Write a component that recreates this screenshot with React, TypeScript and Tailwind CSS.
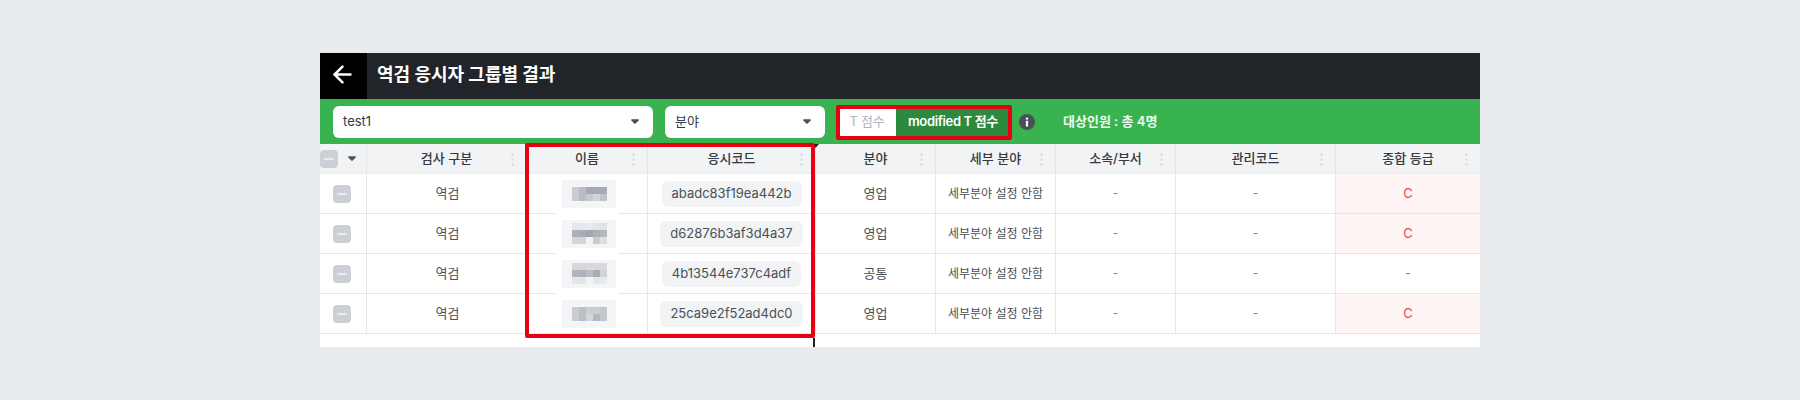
import { ArrowLeft } from "lucide-react"

const rows = [
  {
    code: "abadc83f19ea442b",
    field: "영업",
    grade: "C",
    blurRows: "h-[14px]",
    blur: [
      "bg-[#c9ccd1]", "bg-[#b9bdc7]", "bg-[#a6a9b3]", "bg-[#a6a9b3]", "bg-[#a8acb6]",
      "bg-[#c9ccd1]", "bg-[#b9bdc7]", "bg-[#c6c9ce]", "bg-[#d3d5d9]", "bg-[#c0c4cd]",
    ],
  },
  {
    code: "d62876b3af3d4a37",
    field: "영업",
    grade: "C",
    blurRows: "h-[21px]",
    blur: [
      "bg-[#e6e7ea]", "bg-[#e6e7ea]", "bg-[#e9eaec]", "bg-[#e2e4e7]", "bg-[#dfe1e4]",
      "bg-[#aeb1b8]", "bg-[#a9acb6]", "bg-[#a2a5b1]", "bg-[#adb0b8]", "bg-[#b4b7be]",
      "bg-[#d3d5d9]", "bg-[#d3d5d9]", "bg-[#f1f2f4]", "bg-[#c8cbd0]", "bg-[#dcdee1]",
    ],
  },
  {
    code: "4b13544e737c4adf",
    field: "공통",
    grade: "-",
    blurRows: "h-[21px]",
    blur: [
      "bg-[#d6d8dc]", "bg-[#d6d8dc]", "bg-[#d6d8dc]", "bg-[#d6d8dc]", "bg-[#d6d8dc]",
      "bg-[#b2b5bb]", "bg-[#b0b3ba]", "bg-[#bbbec4]", "bg-[#a9acb3]", "bg-[#d1d3d7]",
      "bg-[#e6e7ea]", "bg-[#e3e5e8]", "bg-[#f2f3f4]", "bg-[#e3e5e8]", "bg-[#e8e9eb]",
    ],
  },
  {
    code: "25ca9e2f52ad4dc0",
    field: "영업",
    grade: "C",
    blurRows: "h-[14px]",
    blur: [
      "bg-[#c9ccd1]", "bg-[#bcbfc7]", "bg-[#c9ccd1]", "bg-[#c9ccd1]", "bg-[#c4c7cd]",
      "bg-[#c9ccd1]", "bg-[#bcbfc7]", "bg-[#d3d5d9]", "bg-[#b5b8c0]", "bg-[#c4c7cd]",
    ],
  },
]

const columns = [
  { label: "검사 구분", width: "w-[160px]" },
  { label: "이름", width: "w-[121px]" },
  { label: "응시코드", width: "w-[168px]" },
  { label: "분야", width: "w-[120px]" },
  { label: "세부 분야", width: "w-[120px]" },
  { label: "소속/부서", width: "w-[120px]" },
  { label: "관리코드", width: "w-[160px]" },
  { label: "종합 등급", width: "w-[144px]" },
]

function Caret({ className }: { className?: string }) {
  return (
    <svg width="8" height="5" viewBox="0 0 8 5" className={className}>
      <path d="M.9.2h6.2c.7 0 1 .7.6 1.2L4.6 4.6c-.3.4-.9.4-1.2 0L.3 1.4C-.1.9.2.2.9.2z" fill="#495057" />
    </svg>
  )
}

function Kebab() {
  return (
    <svg width="3" height="13" viewBox="0 0 3 13" className="absolute right-[12px] top-[9px]">
      <circle cx="1.5" cy="1.5" r="1.1" fill="#ced4da" />
      <circle cx="1.5" cy="6.5" r="1.1" fill="#ced4da" />
      <circle cx="1.5" cy="11.5" r="1.1" fill="#ced4da" />
    </svg>
  )
}

function Minus() {
  return (
    <span className="flex items-center justify-center w-[18px] h-[18px] rounded-[4px] bg-[#ccd0d6]">
      <span className="w-[10px] h-[2px] rounded-sm bg-[#e9ecef]" />
    </span>
  )
}

export default function App() {
  return (
    <div
      className="h-[400px] bg-[#e9ecef] pt-[53px] pl-[320px] overflow-hidden"
      style={{ fontFamily: 'Inter, "Noto Sans CJK KR", sans-serif' }}
    >
      <div className="relative w-[1160px] h-[294px] bg-white">
        <div className="flex items-center h-[46px] bg-[#212529]">
          <div className="flex items-center justify-center w-[47px] h-full pr-[2px] pb-[4px] bg-black text-white">
            <ArrowLeft size={27} strokeWidth={2.2} />
          </div>
          <h1 className="ml-[10px] pb-[3px] text-[18px] font-bold text-white">역검 응시자 그룹별 결과</h1>
        </div>

        <div className="flex items-center h-[45px] pl-[13px] bg-[#38b34f]">
          <div className="flex items-center justify-between w-[320px] h-[32px] pl-[10px] pr-[14px] rounded-md bg-white text-[13px] text-[#343a40]">
            test1
            <Caret />
          </div>
          <div className="flex items-center justify-between w-[160px] h-[32px] ml-[12px] pl-[10px] pr-[14px] rounded-md bg-white text-[13px] text-[#343a40]">
            분야
            <Caret />
          </div>
          <div className="flex h-[32px] ml-[13px] text-[13px]">
            <span className="flex items-center justify-center w-[58px] bg-white text-[#adb5bd] tracking-[-0.2px]">T 점수</span>
            <span className="flex items-center justify-center w-[114px] bg-[#2b8a3e] font-semibold text-white tracking-[-0.35px]">modified T 점수</span>
          </div>
          <svg width="16" height="16" viewBox="0 0 16 16" className="ml-[9px]">
            <circle cx="8" cy="8" r="8" fill="#495057" />
            <circle cx="8" cy="4.6" r="1.2" fill="#fff" />
            <rect x="6.9" y="6.8" width="2.2" height="5.6" rx="0.5" fill="#fff" />
          </svg>
          <span className="ml-[28px] text-[13px] font-semibold text-[#f1f8f2]">대상인원 : 총 4명</span>
        </div>

        <div className="flex h-[30px] bg-[#f1f3f5] border-b border-[#e9ecef]">
          <div className="flex items-center w-[47px] border-r border-[#e5e7eb]">
            <Minus />
            <Caret className="ml-[10px]" />
          </div>
          {columns.map((col) => (
            <div
              key={col.label}
              className={`relative flex items-center justify-center border-r border-[#e5e7eb] last:border-r-0 text-[13px] font-medium text-[#343a40] ${col.width}`}
            >
              {col.label}
              <Kebab />
            </div>
          ))}
        </div>

        {rows.map((row, i) => (
          <div key={row.code} className="flex h-[40px] border-b border-[#e5e7eb] text-[13px] text-[#495057]">
            <div className="flex items-center justify-center w-[47px] pr-[2px] border-r border-[#e5e7eb]">
              <Minus />
            </div>
            <div className="flex items-center justify-center w-[160px] pl-[2px] border-r border-[#e5e7eb]">역검</div>
            <div className="relative flex items-center justify-center w-[121px] pl-[4px] border-r border-[#e5e7eb]">
              {i < 3 && <span className="absolute left-[29px] bottom-[-1px] w-[62px] h-[2px] bg-white" />}
              <div className="relative flex items-center justify-center w-[54px] h-[28px] bg-[#f4f5f7]">
                <div className={`grid grid-cols-5 w-[35px] ${row.blurRows}`}>
                  {row.blur.map((color, j) => (
                    <span key={j} className={color} />
                  ))}
                </div>
              </div>
            </div>
            <div className="flex items-center justify-center w-[168px] border-r border-[#e5e7eb]">
              <span className="flex items-center h-[26px] px-[10px] rounded-md bg-[#f1f3f5] text-[#495057]">{row.code}</span>
            </div>
            <div className="flex items-center justify-center w-[120px] border-r border-[#e5e7eb]">{row.field}</div>
            <div className="flex items-center justify-center w-[120px] border-r border-[#e5e7eb] text-[12px]">세부분야 설정 안함</div>
            <div className="flex items-center justify-center w-[120px] border-r border-[#e5e7eb] text-[#868e96]">-</div>
            <div className="flex items-center justify-center w-[160px] border-r border-[#e5e7eb] text-[#868e96]">-</div>
            {row.grade === "C" ? (
              <div className="flex items-center justify-center w-[144px] bg-[#fff5f4] text-[#e5484d]">C</div>
            ) : (
              <div className="flex items-center justify-center w-[144px] text-[#868e96]">-</div>
            )}
          </div>
        ))}

        <div className="absolute left-[205px] top-[90px] w-[290px] h-[195px] border-[4px] border-[#e60012] rounded-[2px]" />
        <div className="absolute left-[516px] top-[52px] w-[176px] h-[35px] border-[4px] border-[#e60012] rounded-[2px]" />
        <div className="absolute left-[493px] top-[285px] w-[2px] h-[9px] bg-[#212529]" />
        <svg width="5" height="4" viewBox="0 0 5 4" className="absolute left-[494px] top-[91px]">
          <path d="M0 0h5L1.5 4z" fill="#212529" />
        </svg>
      </div>
    </div>
  )
}
